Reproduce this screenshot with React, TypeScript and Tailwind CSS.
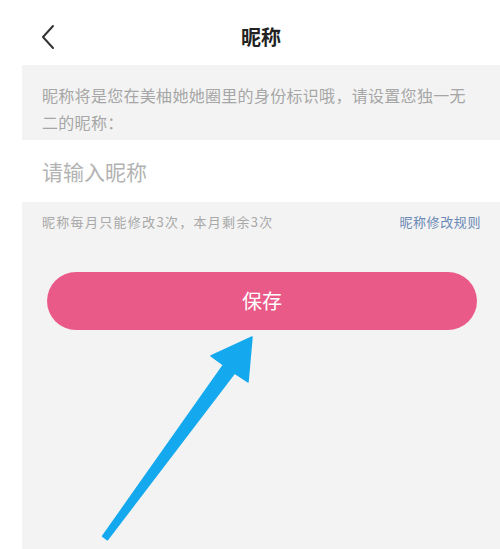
import React from "react";

export default function App() {
  return (
    <div
      className="relative flex w-[500px] h-[549px] overflow-hidden bg-white"
      style={{ fontFamily: '"Noto Sans CJK SC", "Noto Sans", sans-serif' }}
    >
      <div className="w-[22px] shrink-0 bg-white" />
      <div className="flex flex-1 flex-col">
        <div className="grid h-[65px] grid-cols-[1fr_auto_1fr] items-center pt-[8px]">
          <div className="pl-[18px]">
            <svg width="16" height="26" viewBox="0 0 16 26" fill="none">
              <path d="M13 2 L3 13 L13 24" stroke="#333" strokeWidth="2" strokeLinecap="round" strokeLinejoin="round" />
            </svg>
          </div>
          <div className="text-[20px] font-bold leading-none text-[#222]">昵称</div>
          <div />
        </div>
        <div className="h-[75px] bg-[#f3f3f3] pl-[20px] pt-[17px]">
          <p className="w-[430px] text-[16px] leading-[27px] tracking-[0.3px] text-[#a6a6a6]">
            昵称将是您在美柚她她圈里的身份标识哦，请设置您独一无二的昵称：
          </p>
        </div>
        <div className="flex h-[62px] items-center bg-white pl-[20px] pt-[1px]">
          <span className="text-[21px] leading-none text-[#b3b3b3]">请输入昵称</span>
        </div>
        <div className="flex flex-1 flex-col bg-[#f3f3f3]">
          <div className="flex items-center justify-between pl-[20px] pr-[19px] pt-[10px]">
            <span className="text-[13px] leading-[20px] tracking-[1.3px] text-[#a8a8a8]">
              昵称每月只能修改3次，本月剩余3次
            </span>
            <span className="text-[13px] leading-[20px] tracking-[0.6px] text-[#6a89b3]">
              昵称修改规则
            </span>
          </div>
          <div className="ml-[25px] mr-[23px] mt-[40px] flex h-[58px] items-center justify-center rounded-full bg-[#ea5a88]">
            <span className="text-[20px] leading-none text-white">保存</span>
          </div>
        </div>
      </div>
      <svg className="pointer-events-none absolute left-0 top-0" width="500" height="549" viewBox="0 0 500 549">
        <polygon
          points="102.6,536.2 223.4,364.9 211,356 252,337 248,382 234.6,373.1 107.4,539.8"
          fill="#14a9ee"
          stroke="#14a9ee"
          strokeWidth="1.5"
          strokeLinejoin="round"
        />
      </svg>
    </div>
  );
}
